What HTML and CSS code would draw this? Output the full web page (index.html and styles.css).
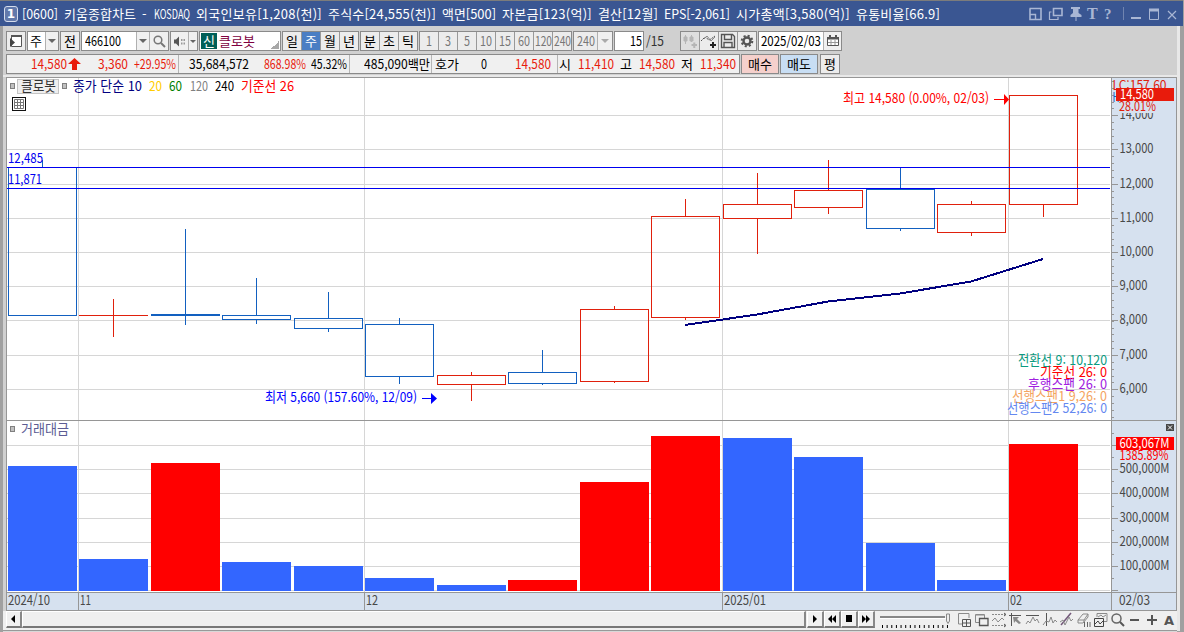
FILE: index.html
```html
<!DOCTYPE html>
<html lang="ko">
<head>
  <meta charset="UTF-8">
  <title>[0600] 키움종합차트</title>
  <link rel="stylesheet" href="styles.css">
</head>
<body>

<header class="titlebar">
  <span class="badge">1</span>
  <div class="title">
    <span data-w="36">[0600]</span>
    <span data-w="72">키움종합차트</span>
    <span data-w="6">-</span>
    <span data-w="36">KOSDAQ</span>
    <span data-w="126">외국인보유[1,208(천)]</span>
    <span data-w="108">주식수[24,555(천)]</span>
    <span data-w="54">액면[500]</span>
    <span data-w="90">자본금[123(억)]</span>
    <span data-w="60">결산[12월]</span>
    <span data-w="66">EPS[-2,061]</span>
    <span data-w="114">시가총액[3,580(억)]</span>
    <span data-w="84">유통비율[66.9]</span>
  </div>
  <svg class="window-icons" width="150" height="16" viewBox="0 0 150 16" fill="none" stroke="#a9b6d4">
    <path d="M1 2.500V13.500H12V2.500H0.500" stroke-width="1.600"/>
    <path d="M1 8.500H6.500V13" stroke-width="1.400"/>
    <path d="M24.500 2.500H33V9.500H24.500Z" stroke-width="1.600"/>
    <path d="M22.500 6H20.500V13.500H29V11" stroke-width="1.200"/>
    <path d="M42 1h9v2h-1.500v4l3 2v2h-5v4h-1v-4h-5v-2l2.500-2v-4h-2z" fill="#a9b6d4" stroke="none"/>
    <text class="t-icon" x="58" y="13">T</text>
    <text class="q-icon" x="75" y="13">?</text>
    <path d="M94.500 1V14" stroke="#7084b0"/>
    <path d="M102 12H112" stroke-width="2"/>
    <path d="M120.500 4.500H129.500V13.500H120.500Z"/>
    <path d="M120 4H130" stroke-width="3"/>
    <path d="M139 5L147 13M147 5L139 13" stroke-width="1.200"/>
  </svg>
</header>

<div class="frame">
  <div class="toolbar">
    <button class="btn w20"><svg width="16" height="16" viewBox="0 0 16 16"><path d="M3.500 2.500H13.500V13.500H3.500Z" fill="#fff" stroke="#555"/><path d="M3 2H14V4H3Z" fill="#555"/><path d="M2 5L7 9.500L2 14Z" fill="#444"/></svg></button>
    <div class="select period"><div class="value">주</div><i class="arrow"></i></div>
    <button class="btn w20">전</button>
    <div class="select code"><div class="value"><span data-w="36">466100</span></div><i class="arrow"></i><b class="search"><svg width="14" height="14" viewBox="0 0 14 14" fill="none" stroke="#777"><circle cx="6" cy="6" r="3.800" stroke-width="1.500"/><path d="M9 9L13 13" stroke-width="2"/></svg></b></div>
    <div class="select sound"><div class="value"><svg width="13" height="13" viewBox="0 0 13 13" fill="#555"><path d="M1 4.500H3L6 1.500V11.500L3 8.500H1Z"/><path d="M8 4h1.500v2H8zM8 7.500h1.500v2H8zM10.500 4H12v2h-1.500zM10.500 7.500H12v2h-1.500z" fill="#999"/></svg></div><i class="arrow"></i></div>
    <div class="stock"><em>신</em><strong data-w="36">클로봇</strong></div>
    <div class="group days"><button>일</button><button class="on">주</button><button>월</button><button>년</button></div>
    <div class="group units"><button>분</button><button>초</button><button>틱</button></div>
    <div class="group minutes">
      <button><span data-w="6">1</span></button>
      <button><span data-w="6">3</span></button>
      <button><span data-w="6">5</span></button>
      <button><span data-w="12">10</span></button>
      <button><span data-w="12">15</span></button>
      <button><span data-w="12">60</span></button>
      <button><span data-w="17">120</span></button>
      <button><span data-w="17">240</span></button>
    </div>
    <div class="select disabled custom"><div class="value"><span data-w="18">240</span></div><i class="arrow"></i></div>
    <div class="count"><span data-w="12">15</span></div>
    <div class="total"><span data-w="18">/15</span></div>
    <div class="group tools">
      <button class="off"><svg width="16" height="16" viewBox="0 0 16 16" stroke="#b5b5b5" fill="#b5b5b5"><path d="M2 4h3v4H2zM8 4h3v4H8zM3.500 2v9M9.500 2v7"/><path d="M9.500 12H15M12.300 9.500V15" stroke-width="2"/></svg></button>
      <button><svg width="16" height="16" viewBox="0 0 16 16" fill="none" stroke="#555"><path d="M0 8L4 4L8 7L10 6L14 3" stroke-dasharray="2 .7"/><path d="M3 6L6 3L10 8L14 4" stroke="#888"/><path d="M9 12H15M12 9V15" stroke="#222" stroke-width="2"/></svg></button>
      <button><svg width="16" height="16" viewBox="0 0 16 16" fill="none" stroke="#555" stroke-width="1.400"><path d="M1.500 1.500H12.500L14.500 3.500V14.500H1.500Z"/><path d="M4.500 2V6.500H11.500V2M4 14V9.500H12V14"/></svg></button>
      <button><svg width="16" height="16" viewBox="0 0 16 16" fill="none" stroke="#555"><circle cx="8" cy="8" r="3.500" stroke-width="2.400"/><circle cx="8" cy="8" r="5.300" stroke-width="2" stroke-dasharray="2.100 2.060"/></svg></button>
    </div>
    <div class="select date"><div class="value"><span data-w="60">2025/02/03</span></div><b><svg width="12" height="12" viewBox="0 0 12 12"><path d="M.5 2.500H11.500V10.500H.5Z" fill="#fff" stroke="#555"/><path d="M0 2H12V4.500H0ZM2 0H4V3H2ZM8 0H10V3H8Z" fill="#555"/><path d="M4 5V10M8 5V10M1 7.500H11" stroke="#999"/></svg></b></div>
  </div>

  <div class="quote-row">
    <div class="quote">
      <div class="cell q-price"><span class="up" data-w="36">14,580</span><svg width="13" height="12" viewBox="0 0 13 12"><path d="M6.500 0L13 6H9V12H4V6H0Z" fill="#e81b0c"/></svg><span class="up" data-w="30">3,360</span><span class="up" data-w="42">+29.95%</span></div>
      <div class="cell q-volume"><span data-w="60">35,684,572</span><span class="up" data-w="42">868.98%</span><span data-w="36">45.32%</span></div>
      <div class="cell q-amount"><span data-w="66">485,090백만</span></div>
      <div class="cell q-bid"><span data-w="24">호가</span><span data-w="6">0</span><span class="up" data-w="36">14,580</span></div>
      <div class="cell q-ohl"><span>시</span><span class="up" data-w="36">11,410</span><span>고</span><span class="up" data-w="36">14,580</span><span>저</span><span class="up" data-w="36">11,340</span></div>
    </div>
    <button class="btn buy">매수</button>
    <button class="btn sell">매도</button>
    <button class="btn w20">평</button>
  </div>

  <svg id="chart" width="1171" height="534" viewBox="6 77 1171 534"></svg>

  <footer class="bottombar">
    <button class="sb"><svg width="8" height="8" viewBox="0 0 8 8"><path d="M6 0V8L2 4Z"/></svg></button>
    <div class="thumb"></div>
    <button class="sb"><svg width="8" height="8" viewBox="0 0 8 8"><path d="M2 0V8L6 4Z"/></svg></button>
    <button class="sb"><svg width="10" height="8" viewBox="0 0 10 8"><path d="M5 0V8L1 4ZM9 0V8L5 4Z"/></svg></button>
    <button class="sb"><svg width="8" height="8" viewBox="0 0 8 8"><path d="M1 0H7V7H1Z"/></svg></button>
    <button class="sb"><svg width="10" height="8" viewBox="0 0 10 8"><path d="M1 0V8L5 4ZM5 0V8L9 4Z"/></svg></button>
    <svg class="slider" width="72" height="18" viewBox="0 0 72 18">
      <path d="M0 6H65" stroke="#888" stroke-width="2"/><path d="M0 7.500H66" stroke="#fff"/>
      <path d="M66.500 3V10L68 12.500L69.500 10V3Z" fill="#eee" stroke="#888"/>
      <path d="M2 15.500H68" stroke="#000" stroke-width="3" stroke-dasharray="1 3.640"/>
    </svg>
    <div class="chart-tools">
      <svg viewBox="0 0 16 16"><path d="M12 6V1.500H1.500V12H5"/><path d="M5.500 7.500H13.500V14.500H5.500ZM9.500 7V15M5 11H14" stroke="#555"/></svg>
      <svg viewBox="0 0 16 16"><path d="M5 10.500H1.500V2.500H10.500V6"/><path d="M5.500 6.500H14V13.500H5.500Z" stroke="#555" stroke-width="1.300"/><path d="M2 3H10"/></svg>
      <svg viewBox="0 0 16 16"><path d="M1 2.500H14M1 13.500H14" stroke-dasharray="2 1"/><path d="M1 9L4 6L7 10L11 6L13 8"/><path d="M13 1L15 2.500L13 4M13 12L15 13.500L13 15" stroke="#555"/></svg>
      <svg viewBox="0 0 16 16"><path d="M1 3.500H13M3.500 1V14" stroke="#555"/><path d="M5 5H11L9 7L13 11L11 12L7.500 9L6 11Z" fill="#888" stroke="none"/></svg>
      <svg viewBox="0 0 16 16"><path d="M1 3.500H14" stroke="#555"/><path d="M1 12L3 9L5 11L8 5L10 9L12 7L14 11"/></svg>
      <svg viewBox="0 0 16 16"><path d="M4.500 1V14" stroke="#555"/><path d="M1 13L4 9L7 10L9 5L11 11L13 8L15 10"/></svg>
      <svg viewBox="0 0 16 16"><path d="M2 13L12 1" stroke="#74587a" stroke-width="1.500"/><path d="M1 10L4 8L6 13L10 5L12 9L14 7"/></svg>
      <svg viewBox="0 0 16 16"><path d="M2 8L7 2H12L8 8ZM2 8V11H7L12 5V2M8 8V11"/><path d="M8.500 10V15M11.500 10V15M14 10V15" stroke="#666"/></svg>
      <svg viewBox="0 0 16 16"><path d="M4 5V1.500H14V9.500H11M5 5L8 3L10 5L13 3"/><path d="M1.500 6.500H10.500V14.500H1.500ZM2 12L5 9L7 12L10 9" stroke="#444"/></svg>
      <svg viewBox="0 0 16 16"><circle cx="6.500" cy="6.500" r="4.500" stroke="#666" stroke-width="1.500"/><path d="M10 10L14 14" stroke="#555" stroke-width="2"/></svg>
      <svg viewBox="0 0 16 16"><path d="M3 8H12" stroke="#555" stroke-width="2"/></svg>
      <svg viewBox="0 0 16 16"><path d="M3 8H13M8 3V13" stroke="#555" stroke-width="2"/></svg>
      <svg viewBox="0 0 16 16"><text x="3" y="13">A</text></svg>
    </div>
  </footer>
</div>

<script>
  const RED = "#e0200c", BLUE = "#1260c0", GRID = "#d6d6d6", AXIS = "#969696", BAND = "#d6e1ef", LABEL = "#484848";
  const chart = document.getElementById("chart");

  // x, body top, body bottom, high, low, direction, volume bar top, volume direction
  const weeks = [
    [8, 167, 315, 160, 315, "d", 466, "d"],
    [79, 315, 315, 299, 336, "u", 559, "d"],
    [151, 314, 315, 229, 324, "d", 463, "u"],
    [222, 315, 319, 278, 323, "d", 562, "d"],
    [294, 318, 328, 292, 331, "d", 566, "d"],
    [365, 324, 376, 318, 383, "d", 578, "d"],
    [437, 375, 384, 372, 400, "u", 585, "d"],
    [508, 372, 383, 350, 384, "d", 580, "u"],
    [580, 309, 381, 306, 382, "u", 482, "u"],
    [651, 216, 317, 199, 319, "u", 436, "u"],
    [723, 204, 218, 173, 253, "u", 438, "d"],
    [794, 190, 207, 160, 213, "u", 457, "d"],
    [866, 189, 228, 168, 230, "d", 543, "d"],
    [937, 204, 232, 201, 235, "u", 580, "d"],
    [1009, 95, 204, 95, 216, "u", 444, "u"]
  ];
  const priceRows = [[115, "14,000"], [149, "13,000"], [184, "12,000"], [218, "11,000"], [252, "10,000"], [286, "9,000"], [320, "8,000"], [355, "7,000"], [389, "6,000"]];
  const volumeRows = [[445, ""], [469, "500,000M"], [493, "400,000M"], [518, "300,000M"], [542, "200,000M"], [566, "100,000M"], [590, ""]];
  const months = [[78, "11", 11], [364, "12", 12], [722, "2025/01", 42], [1008, "02", 12]];

  function add(tag, attrs, text) {
    const el = document.createElementNS("http://www.w3.org/2000/svg", tag);
    for (const key in attrs) el.setAttribute(key, attrs[key]);
    if (text) el.textContent = text;
    chart.appendChild(el);
  }
  function rect(x, y, width, height, fill) {
    add("rect", { x, y, width, height, fill });
  }
  function label(x, y, text, width, fill) {
    add("text", { x, y, fill, textLength: width, lengthAdjust: "spacingAndGlyphs" }, text);
  }

  // panels and axes
  rect(6, 77, 1171, 534, "#fff");
  rect(1111, 77, 66, 534, BAND);
  rect(6, 592, 1171, 19, BAND);
  priceRows.concat(volumeRows).forEach(r => rect(7, r[0], 1103, 1, GRID));
  months.forEach(m => {
    rect(m[0], 78, 1, 514, GRID);
    rect(m[0], 592, 1, 18, AXIS);
    label(m[0] + 2, 605, m[1], m[2], LABEL);
  });
  label(8, 605, "2024/10", 42, LABEL);
  label(1119, 605, "02/03", 31, LABEL);

  // tick marks
  for (let y = 81; y < 419; y += 6.85) rect(1112, Math.round(y), 2, 1, AXIS);
  for (let y = 433; y < 590; y += 24.2) rect(1112, Math.round(y), 2, 1, AXIS);
  priceRows.concat(volumeRows).forEach(r => {
    rect(1112, r[0], 6, 1, AXIS);
    if (r[1]) label(1119.5, r[0] + 4, r[1], r[1].length == 8 ? 50 : r[1].length == 6 ? 34 : 28, LABEL);
  });

  // volume and candles
  weeks.forEach(([x, top, bottom, high, low, dir, vol, volDir]) => {
    const color = dir == "u" ? RED : BLUE;
    rect(x, vol, 69, 591 - vol, volDir == "u" ? "#ff0000" : "#3366ff");
    if (top > high) rect(x + 34, high, 1, top - high, color);
    if (low > bottom) rect(x + 34, bottom, 1, low - bottom + 1, color);
    if (bottom - top < 2) rect(x, top, 69, bottom - top + 1, color);
    else add("rect", { x: x + 0.5, y: top + 0.5, width: 68, height: bottom - top, fill: "none", stroke: color });
  });
  rect(7, 167, 1103, 1, "#0000f0");
  rect(7, 188, 1103, 1, "#0000f0");
  add("polyline", { points: "685,325 757,314.5 828,301.5 900,293.5 971,281.5 1043,259", fill: "none", stroke: "#000080", "stroke-width": 2, "shape-rendering": "crispEdges" });

  // frame lines
  rect(6, 77, 1171, 1, AXIS);
  rect(6, 77, 1, 534, AXIS);
  rect(1176, 77, 1, 534, AXIS);
  rect(1111, 77, 1, 534, AXIS);
  rect(6, 420, 1171, 1, AXIS);
  rect(6, 592, 1171, 1, AXIS);
  rect(6, 610, 1171, 1, AXIS);

  // indicator header
  rect(17, 79, 42, 15, "#c4c4c4");
  rect(18, 80, 40, 13, "#eeeeee");
  [[10, 83], [62, 83], [10, 426]].forEach(([x, y]) =>
    add("rect", { x: x + 0.5, y: y + 0.5, width: 4, height: 5, fill: "#c0c0c0", stroke: "#808080" }));
  label(21, 91, "클로봇", 35, "#333");
  label(73, 91, "종가 단순 10", 69, "#000080");
  label(149, 91, "20", 13, "#ffcc00");
  label(169, 91, "60", 13, "#008000");
  label(190, 91, "120", 18, "#808080");
  label(215, 91, "240", 19, "#000");
  label(241, 91, "기준선 26", 53, "#ff0000");
  label(21, 434, "거래대금", 48, "#5c5c94");
  add("rect", { x: 12.5, y: 97.5, width: 13, height: 13, fill: "#fff", stroke: "#111" });
  add("path", { d: "M14.500 99.500H23.500V108.500H14.500ZM14 102.500H24M14 105.500H24M17.500 100V109M20.500 100V109", fill: "none", stroke: "#777" });

  // price marks
  label(8, 163, "12,485", 35, "#0000f0");
  label(8, 184, "11,871", 34, "#0000f0");
  label(843, 103, "최고 14,580 (0.00%, 02/03)", 146, "#ff0000");
  add("path", { d: "M994 99H1004V94L1009 99.500L1004 105V100H994Z", fill: "#ff0000" });
  label(265, 402, "최저 5,660 (157.60%, 12/09)", 152, "#0000ff");
  add("path", { d: "M422 398H431V393L437 398.500L431 404V399H422Z", fill: "#0000ff" });

  label(1018, 365, "전환선 9: 10,120", 89, "#0a9a80");
  label(1040, 377, "기준선 26: 0", 67, "#ff0000");
  label(1028, 389, "후행스팬 26: 0", 79, "#a020e0");
  label(1012, 401, "선행스팬1 9,26: 0", 95, "#f4a460");
  label(1007, 413, "선행스팬2 52,26: 0", 100, "#6488f0");

  // current values on the axis
  label(1112.5, 90, "LC:157.60", 54, RED);
  label(1112.5, 102, "H", 7, BLUE);
  rect(1119, 101, 56, 12, BAND);
  rect(1116, 88, 58, 13, "#e81b0c");
  label(1120, 99, "14,580", 34, "#fff");
  label(1119, 111, "28.01%", 37, RED);
  rect(1116, 437, 58, 13, "#ff0000");
  label(1119.5, 448, "603,067M", 50, "#fff");
  label(1119.5, 460, "1385.89%", 49, "#ff0000");
  rect(1166, 424, 8, 7, "#484848");
  add("path", { d: "M1168 425.500L1172 429.500M1172 425.500L1168 429.500", stroke: "#fff" });

  // condense or space out toolbar texts to their fixed widths
  document.querySelectorAll("[data-w]").forEach(el => {
    const w = +el.dataset.w;
    const natural = el.getBoundingClientRect().width;
    if (natural > w) {
      el.style.transform = `scaleX(${w / natural})`;
      el.style.marginRight = w - natural + "px";
    } else {
      el.style.letterSpacing = (w - natural) / el.textContent.length + "px";
    }
  });
</script>

</body>
</html>
```
FILE: styles.css
```css
* {
  box-sizing: border-box;
}

body {
  margin: 0;
  width: 1184px;
  height: 632px;
  overflow: hidden;
  background: #a0a0a0;
  font: 13px/16px "Noto Sans CJK KR", sans-serif;
  color: #000;
}

button {
  font: inherit;
  color: inherit;
  margin: 0;
  padding: 0;
}

svg {
  display: block;
  flex: none;
}

[data-w] {
  display: inline-block;
  flex: none;
  transform-origin: 0 50%;
  white-space: nowrap;
}

.titlebar {
  display: flex;
  align-items: center;
  height: 26px;
  width: 1183px;
  padding-left: 4px;
  border-top: 1px solid #7c7c7c;
  background: #3a5692;
  color: #fff;
}

.badge {
  width: 14px;
  height: 16px;
  border: 1px solid #d5dcec;
  border-radius: 3px;
  background: #6279ab;
  font: bold 12px/14px "DejaVu Sans", sans-serif;
  text-align: center;
}

.title {
  display: flex;
  gap: 6px;
  width: 1007px;
  margin-left: 4px;
}

.window-icons .t-icon {
  font: bold 16px "Liberation Serif", serif;
  fill: #a9b6d4;
  stroke: none;
}

.window-icons .q-icon {
  font: bold 15px "Liberation Serif", serif;
  fill: #a9b6d4;
  stroke: none;
}

.frame {
  width: 1177px;
  height: 605px;
  margin-left: 3px;
  background: #d0d0d0;
  border-right: 3px solid #e8e8e8;
}

.toolbar {
  display: flex;
  gap: 1px;
  height: 28px;
  padding: 5px 0 3px 3px;
}

.btn,
.select,
.group,
.stock,
.count {
  height: 20px;
  border: 1px solid #8a8a8a;
  background: #ececec;
}

.btn {
  display: flex;
  align-items: center;
  justify-content: center;
}

.w20 {
  width: 20px;
}

.select {
  display: flex;
}

.value {
  flex: none;
  padding-left: 3px;
  background: #fff;
  line-height: 18px;
  white-space: nowrap;
}

.select .arrow,
.select b {
  flex: 1;
  display: flex;
  align-items: center;
  justify-content: center;
  border-left: 1px solid #b0b0b0;
  background: #f0f0f0;
}

.arrow::after {
  content: "";
  border: 4px solid transparent;
  border-top-color: #666;
  border-bottom: 0;
}

.period {
  width: 32px;
}

.period .value {
  width: 17px;
  padding-left: 2px;
}

.code {
  width: 88px;
}

.code .value {
  width: 54px;
}

.select .search {
  flex: 0 0 19px;
}

.sound {
  width: 28px;
}

.sound .value {
  display: flex;
  align-items: center;
  width: 17px;
  padding-left: 2px;
  background: #f0f0f0;
}

.sound .arrow::after {
  border-width: 3px 3px 0;
}

.stock {
  display: flex;
  width: 82px;
  padding: 1px;
  background: linear-gradient(135deg, transparent 50%, #a8a8a8 50%) right 1px bottom 1px / 8px 8px no-repeat #fff;
  line-height: 16px;
}

.stock em {
  width: 16px;
  background: #006058;
  color: #fff;
  font-style: normal;
  text-align: center;
}

.stock strong {
  margin-left: 2px;
  color: #800040;
  font-weight: normal;
}

.group {
  display: flex;
}

.group button {
  flex: 1 1 0;
  min-width: 0;
  display: flex;
  align-items: center;
  justify-content: center;
  border: 0;
  border-right: 1px solid #999;
  background: #ececec;
}

.group button:last-child {
  border-right: 0;
}

.group .on {
  background: #4a7ec4;
  color: #fff;
}

.days {
  width: 77px;
}

.units {
  width: 58px;
}

.minutes {
  width: 153px;
  color: #777;
}

.custom {
  width: 40px;
  color: #777;
}

.custom .value {
  width: 23px;
  background: #ececec;
}

.disabled .arrow::after {
  border-top-color: #aaa;
}

.count {
  display: flex;
  justify-content: flex-end;
  width: 30px;
  padding-right: 1px;
  background: #fff;
  line-height: 18px;
}

.total {
  width: 34px;
  padding-left: 1px;
  line-height: 20px;
  color: #333;
}

.tools {
  width: 77px;
}

.tools .off {
  background: #dedede;
}

.date {
  width: 84px;
}

.date .value {
  width: 64px;
  padding-left: 2px;
}

.quote-row {
  display: flex;
  gap: 1px;
  height: 23px;
  padding-left: 3px;
  border-bottom: 2px solid #e8e8e8;
}

.quote {
  display: flex;
  width: 734px;
  height: 20px;
  border: 1px solid #8a8a8a;
  background: #f0f0f0;
}

.cell {
  display: grid;
  justify-items: end;
  align-items: center;
  line-height: 18px;
  white-space: nowrap;
  border-right: 1px solid #b5b5b5;
}

.cell:last-child {
  border-right: 0;
}

.up {
  color: #e81b0c;
}

.q-price {
  width: 172px;
  grid-template-columns: 60px 14px 47px 48px;
}

.q-volume {
  width: 171px;
  grid-template-columns: 70px 57px 41px;
}

.q-amount {
  width: 82px;
  grid-template-columns: 80px;
}

.q-bid {
  width: 126px;
  grid-template-columns: 27px 28px 64px;
}

.q-ohl {
  width: 181px;
  grid-template-columns: 13px 43px 18px 43px 18px 43px;
}

.buy,
.sell {
  width: 38px;
}

.buy {
  background: #f5d0cc;
}

.sell {
  margin-right: 1px;
  background: #c8def4;
}

#chart {
  margin-left: 3px;
}

#chart text {
  font-size: 13.5px;
}

.bottombar {
  display: flex;
  height: 20px;
  padding-left: 3px;
  background: #efefef;
  border-bottom: 1px solid #999;
  box-shadow: 0 1px #d8d8d8;
}

.sb {
  display: flex;
  align-items: center;
  justify-content: center;
  width: 17px;
  height: 17px;
  border: 1px solid #fff;
  border-right: 2px solid #888;
  border-bottom: 2px solid #777;
  background: #f0f0f0;
}

.sb:first-child {
  width: 16px;
}

.thumb {
  width: 785px;
  height: 17px;
  margin-right: 1px;
  border: 1px solid #fff;
  border-right: 2px solid #888;
  border-bottom: 2px solid #777;
  background: #efefef;
}

.slider {
  margin-left: 5px;
}

.chart-tools {
  display: flex;
  gap: 1px;
  margin: 1px 0 0 5px;
}

.chart-tools svg {
  width: 16px;
  height: 16px;
  fill: none;
  stroke: #8a8a8a;
}

.chart-tools text {
  font: bold 13px "DejaVu Sans", sans-serif;
  fill: #555;
  stroke: none;
}
```
